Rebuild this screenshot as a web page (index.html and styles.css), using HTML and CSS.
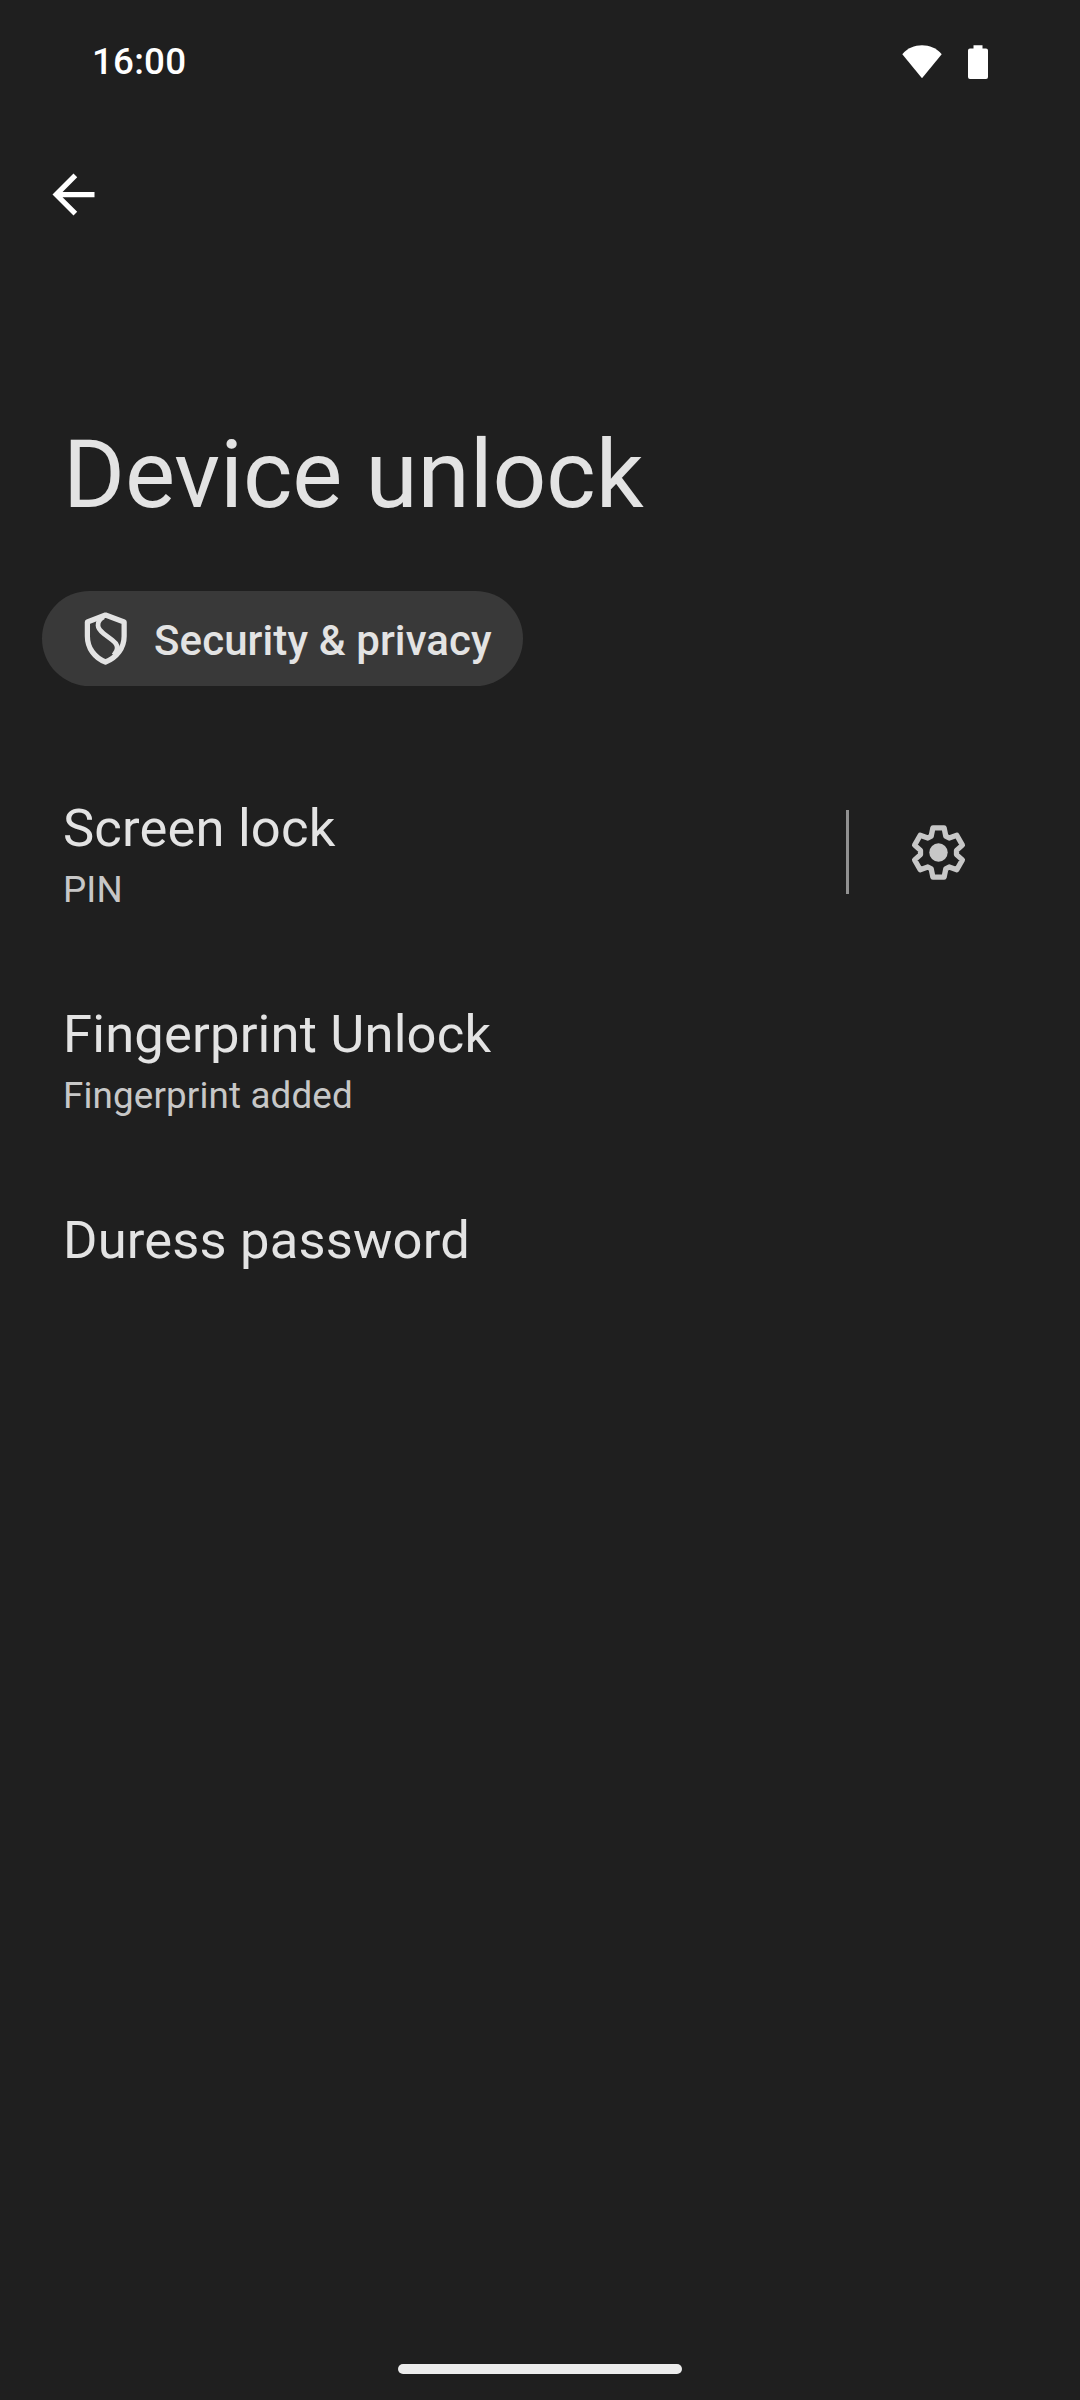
FILE: index.html
```html
<!DOCTYPE html>
<html lang="en">
<head>
<meta charset="utf-8">
<title>Device unlock</title>
<link rel="stylesheet" href="styles.css">
</head>
<body>
<div class="status-bar">
  <span class="clock">16:00</span>
  <div class="status-icons">
    <svg class="wifi" viewBox="0 0 40 34"><path d="M0.3 9.2C5.5 3 12.5 0.3 20 0.3S34.5 3 39.7 9.2L20 33.3Z"/></svg>
    <svg class="battery" viewBox="0 0 20 34"><path d="M5.5 0.3H14.5V3.5H18Q20 3.5 20 5.5V32Q20 34 18 34H2Q0 34 0 32V5.5Q0 3.5 2 3.5H5.5Z"/></svg>
  </div>
</div>
<header class="app-bar">
  <svg class="back" viewBox="0 0 24 24"><path d="M20 11H7.83l5.59-5.59L12 4l-8 8 8 8 1.41-1.41L7.83 13H20v-2z"/></svg>
</header>
<main>
  <h1 class="title">Device unlock</h1>
  <div class="chip">
    <svg class="shield" viewBox="0 0 24 24"><path d="M12 3.05L5.1 5.7V11.1C5.1 15.6 7.8 19.3 12 20.95C16.2 19.3 19.1 15.6 19.1 11.1V5.7Z"/><path class="shield-curve" d="M11.3 3.8C9.7 4.6 9.1 5.6 9.15 7C9.2 8.3 10 9.1 11.3 10.1L14.6 12.6C16.2 13.8 17 15.3 16.1 16.9L15.2 18.3"/></svg>
    <span class="chip-label">Security &amp; privacy</span>
  </div>
  <div class="list">
    <div class="row">
      <div class="row-text">
        <div class="row-title">Screen lock</div>
        <div class="row-summary">PIN</div>
      </div>
      <div class="divider"></div>
      <svg class="gear" viewBox="-29.5 -30.5 60 60"><path d="M-5.6 -24.6L5.6 -24.6L7.3 -16.4L10.7 -14.5L18.3 -17.2L23.9 -7.4L18 -2.1L18 2.1L23.9 7.4L18.3 17.2L10.7 14.5L7.3 16.4L5.6 24.6L-5.6 24.6L-7.3 16.4L-10.7 14.5L-18.3 17.2L-23.9 7.4L-18 2.1L-18 -2.1L-23.9 -7.4L-18.3 -17.2L-10.7 -14.5L-7.3 -16.4Z"/><circle r="9.2"/></svg>
    </div>
    <div class="row">
      <div class="row-text">
        <div class="row-title">Fingerprint Unlock</div>
        <div class="row-summary">Fingerprint added</div>
      </div>
    </div>
    <div class="row">
      <div class="row-text">
        <div class="row-title">Duress password</div>
      </div>
    </div>
  </div>
</main>
<footer class="nav-bar"><div class="nav-handle"></div></footer>
</body>
</html>
```
FILE: styles.css
```css
* { box-sizing: border-box; }
body {
  margin: 0;
  height: 2400px;
  display: flex;
  flex-direction: column;
  background: #1f1f1f;
  color: #e3e3e3;
  font-family: Roboto, sans-serif;
}
svg { display: block; flex: none; }
.status-bar {
  height: 118px;
  padding: 5px 92px 0 92px;
  display: flex;
  align-items: center;
  justify-content: space-between;
  color: #fff;
}
.clock {
  font-size: 36.75px;
  font-weight: 500;
  line-height: 43px;
  letter-spacing: 0.2px;
}
.status-icons { display: flex; align-items: center; gap: 26px; }
.wifi { width: 40px; height: 34px; fill: #fff; }
.battery { width: 20px; height: 34px; fill: #fff; }
.app-bar {
  height: 153px;
  padding-left: 42px;
  display: flex;
  align-items: center;
}
.back { width: 63px; height: 63px; fill: #fff; }
main { flex: 1; }
.title {
  margin: 148px 0 0 63px;
  font-size: 94.5px;
  font-weight: 400;
  line-height: 112px;
  letter-spacing: -0.1px;
}
.chip {
  width: 481px;
  height: 95px;
  margin: 60px 0 0 42px;
  padding-left: 32px;
  display: flex;
  align-items: center;
  gap: 17px;
  border-radius: 48px;
  background: #393939;
}
.shield {
  width: 63px;
  height: 63px;
  fill: none;
  stroke: #e3e3e3;
  stroke-width: 2;
  stroke-linejoin: round;
}
.shield-curve { stroke-width: 1.8; }
.chip-label {
  padding-top: 4px;
  font-size: 42px;
  font-weight: 500;
  line-height: 50px;
  letter-spacing: 0.1px;
  white-space: nowrap;
}
.list { margin-top: 63px; }
.row {
  height: 206px;
  padding: 0 111px 0 63px;
  display: flex;
  align-items: center;
}
.row-text {
  flex: 1;
  align-self: flex-start;
  padding-top: 48px;
}
.row-title {
  font-size: 52.5px;
  line-height: 62px;
  letter-spacing: 0.18px;
}
.row-summary {
  margin-top: 9px;
  font-size: 36.75px;
  line-height: 43px;
  letter-spacing: 0.15px;
  color: #c7c7c7;
}
.divider { width: 3px; height: 84px; background: #919191; }
.gear {
  width: 60px;
  height: 60px;
  margin-left: 60px;
}
.gear path {
  fill: none;
  stroke: #c7c7c7;
  stroke-width: 5.3;
  stroke-linejoin: round;
}
.gear circle { fill: #c7c7c7; }
.nav-bar {
  height: 63px;
  padding-top: 27px;
  display: flex;
  justify-content: center;
}
.nav-handle {
  width: 284px;
  height: 10px;
  border-radius: 5px;
  background: #ececec;
}
```
